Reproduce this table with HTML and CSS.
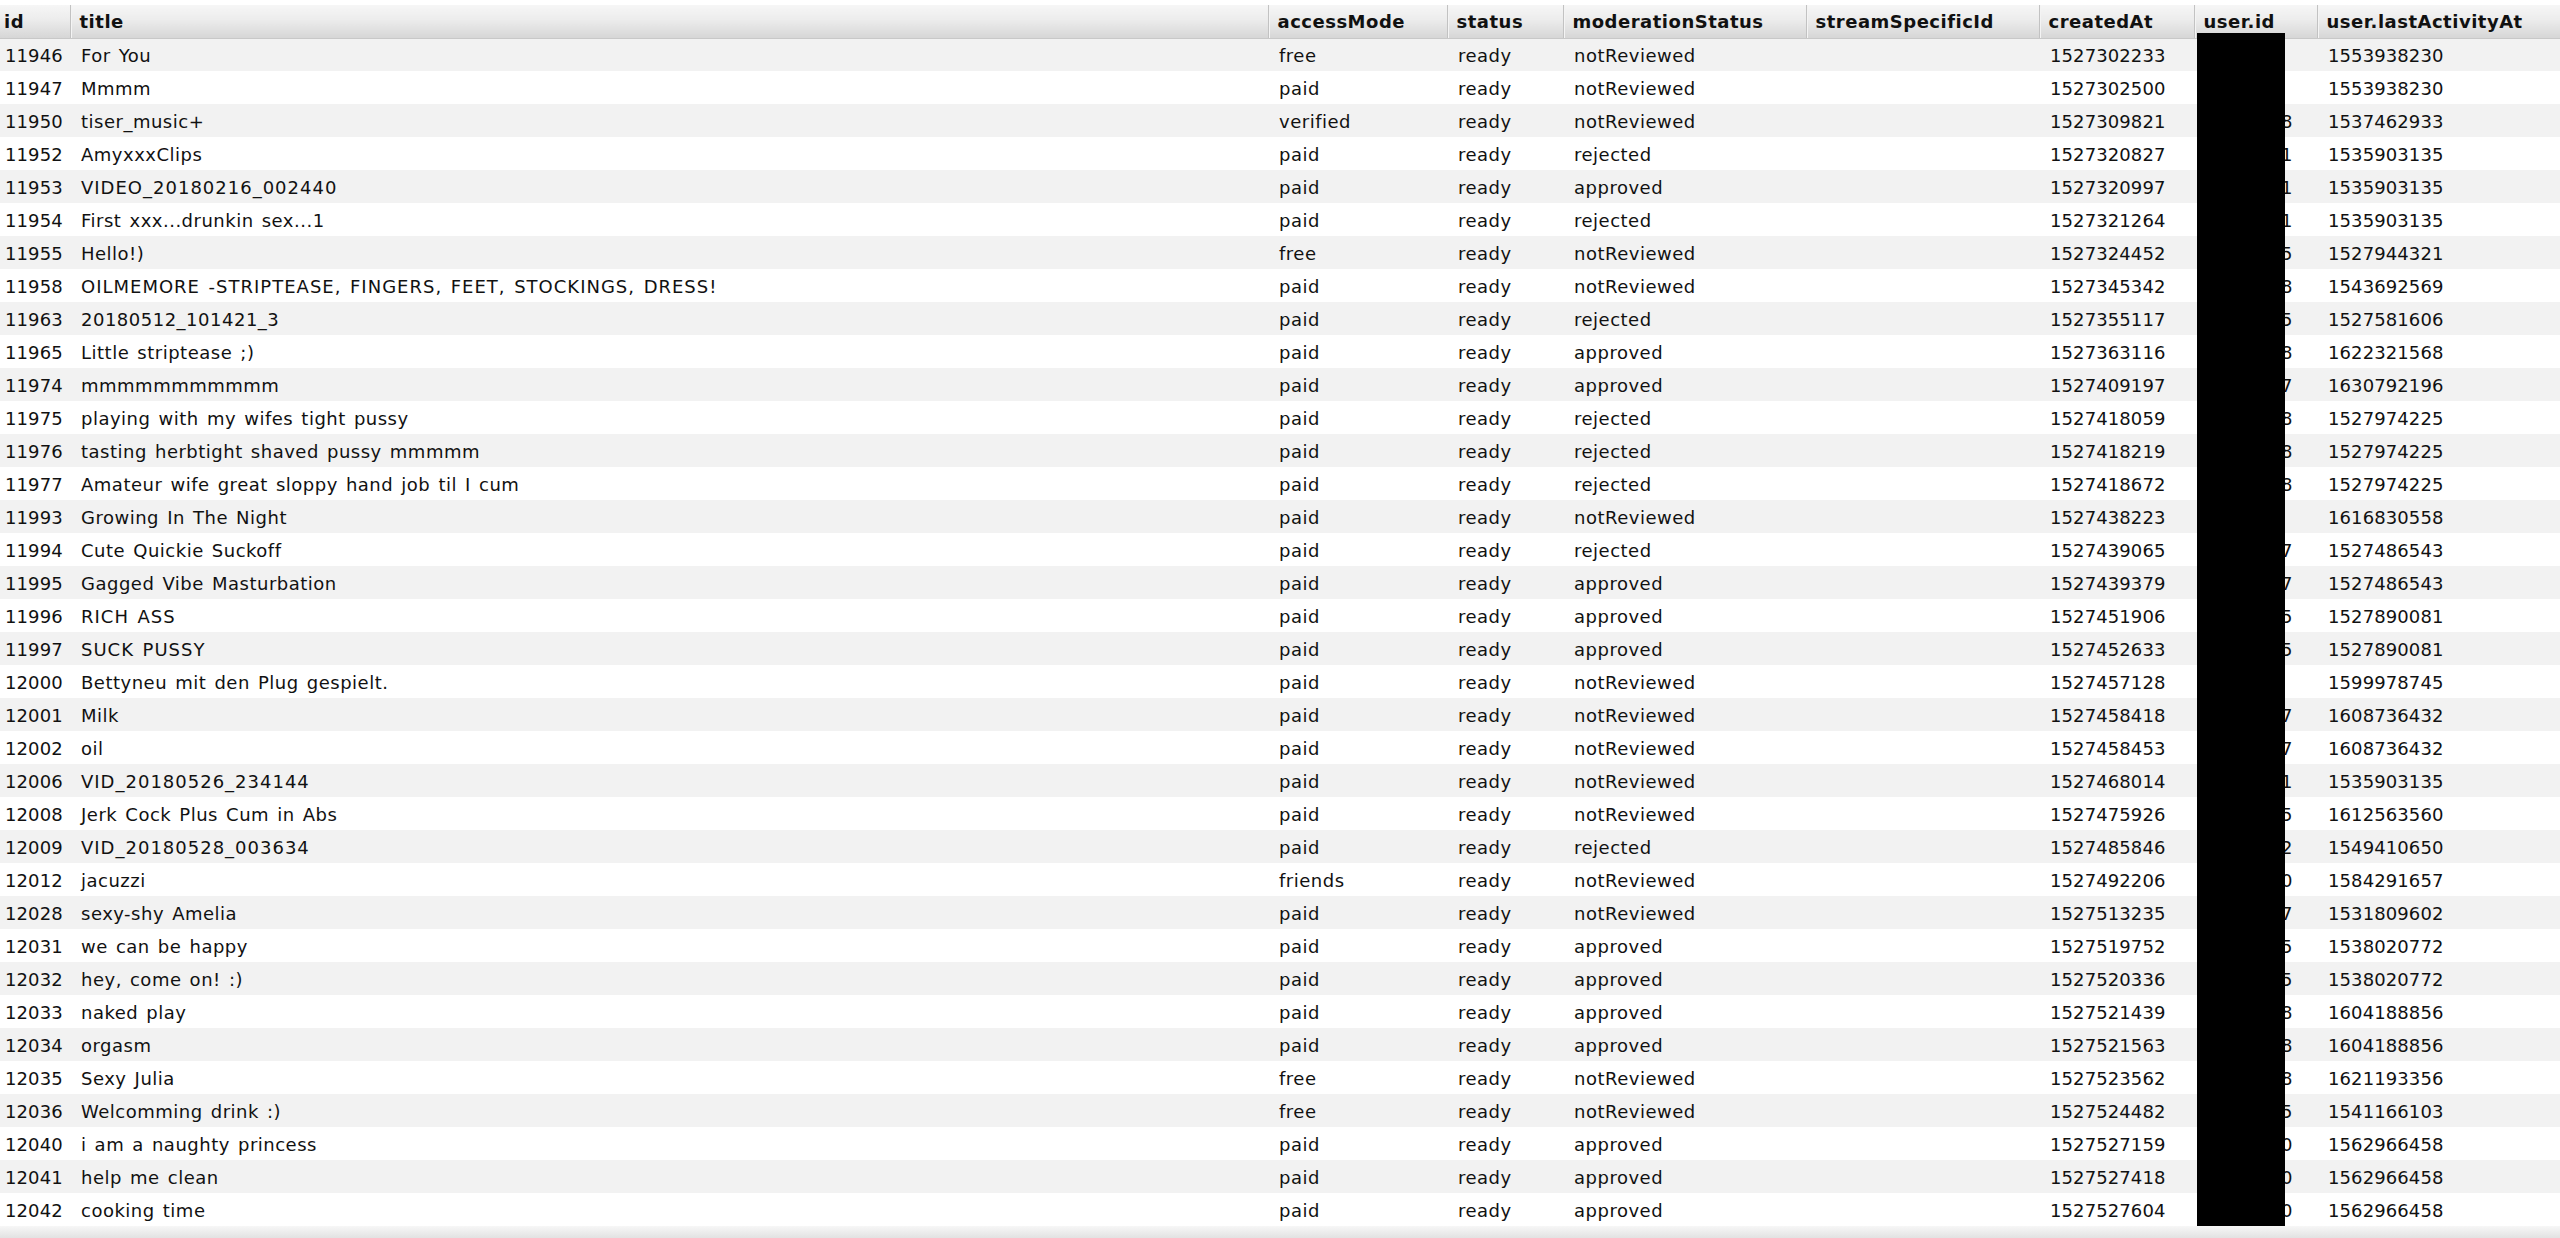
FILE: index.html
```html
<!DOCTYPE html>
<html>
<head>
<meta charset="utf-8">
<link rel="stylesheet" href="styles.css">
</head>
<body>
<div class="grid-wrap">
<table class="grid">
<colgroup>
<col class="c-id"><col class="c-title"><col class="c-access"><col class="c-status"><col class="c-mod"><col class="c-stream"><col class="c-created"><col class="c-uid"><col class="c-last">
</colgroup>
<thead>
<tr>
<th class="first">id</th><th>title</th><th>accessMode</th><th>status</th><th>moderationStatus</th><th>streamSpecificId</th><th>createdAt</th><th>user.id</th><th>user.lastActivityAt</th>
</tr>
</thead>
<tbody>
<tr><td>11946</td><td>For You</td><td>free</td><td>ready</td><td>notReviewed</td><td></td><td>1527302233</td><td class="uid"></td><td>1553938230</td></tr>
<tr><td>11947</td><td>Mmmm</td><td>paid</td><td>ready</td><td>notReviewed</td><td></td><td>1527302500</td><td class="uid"></td><td>1553938230</td></tr>
<tr><td>11950</td><td>tiser_music+</td><td>verified</td><td>ready</td><td>notReviewed</td><td></td><td>1527309821</td><td class="uid">8</td><td>1537462933</td></tr>
<tr><td>11952</td><td>AmyxxxClips</td><td>paid</td><td>ready</td><td>rejected</td><td></td><td>1527320827</td><td class="uid">1</td><td>1535903135</td></tr>
<tr><td>11953</td><td class="caps">VIDEO_20180216_002440</td><td>paid</td><td>ready</td><td>approved</td><td></td><td>1527320997</td><td class="uid">1</td><td>1535903135</td></tr>
<tr><td>11954</td><td>First xxx...drunkin sex...1</td><td>paid</td><td>ready</td><td>rejected</td><td></td><td>1527321264</td><td class="uid">1</td><td>1535903135</td></tr>
<tr><td>11955</td><td>Hello!)</td><td>free</td><td>ready</td><td>notReviewed</td><td></td><td>1527324452</td><td class="uid">5</td><td>1527944321</td></tr>
<tr><td>11958</td><td class="caps">OILMEMORE -STRIPTEASE, FINGERS, FEET, STOCKINGS, DRESS!</td><td>paid</td><td>ready</td><td>notReviewed</td><td></td><td>1527345342</td><td class="uid">8</td><td>1543692569</td></tr>
<tr><td>11963</td><td>20180512_101421_3</td><td>paid</td><td>ready</td><td>rejected</td><td></td><td>1527355117</td><td class="uid">5</td><td>1527581606</td></tr>
<tr><td>11965</td><td>Little striptease ;)</td><td>paid</td><td>ready</td><td>approved</td><td></td><td>1527363116</td><td class="uid">8</td><td>1622321568</td></tr>
<tr><td>11974</td><td>mmmmmmmmmmm</td><td>paid</td><td>ready</td><td>approved</td><td></td><td>1527409197</td><td class="uid">7</td><td>1630792196</td></tr>
<tr><td>11975</td><td>playing with my wifes tight pussy</td><td>paid</td><td>ready</td><td>rejected</td><td></td><td>1527418059</td><td class="uid">8</td><td>1527974225</td></tr>
<tr><td>11976</td><td>tasting herbtight shaved pussy mmmmm</td><td>paid</td><td>ready</td><td>rejected</td><td></td><td>1527418219</td><td class="uid">8</td><td>1527974225</td></tr>
<tr><td>11977</td><td>Amateur wife great sloppy hand job til I cum</td><td>paid</td><td>ready</td><td>rejected</td><td></td><td>1527418672</td><td class="uid">8</td><td>1527974225</td></tr>
<tr><td>11993</td><td>Growing In The Night</td><td>paid</td><td>ready</td><td>notReviewed</td><td></td><td>1527438223</td><td class="uid"></td><td>1616830558</td></tr>
<tr><td>11994</td><td>Cute Quickie Suckoff</td><td>paid</td><td>ready</td><td>rejected</td><td></td><td>1527439065</td><td class="uid">7</td><td>1527486543</td></tr>
<tr><td>11995</td><td>Gagged Vibe Masturbation</td><td>paid</td><td>ready</td><td>approved</td><td></td><td>1527439379</td><td class="uid">7</td><td>1527486543</td></tr>
<tr><td>11996</td><td class="caps">RICH ASS</td><td>paid</td><td>ready</td><td>approved</td><td></td><td>1527451906</td><td class="uid">5</td><td>1527890081</td></tr>
<tr><td>11997</td><td class="caps">SUCK PUSSY</td><td>paid</td><td>ready</td><td>approved</td><td></td><td>1527452633</td><td class="uid">5</td><td>1527890081</td></tr>
<tr><td>12000</td><td>Bettyneu mit den Plug gespielt.</td><td>paid</td><td>ready</td><td>notReviewed</td><td></td><td>1527457128</td><td class="uid"></td><td>1599978745</td></tr>
<tr><td>12001</td><td>Milk</td><td>paid</td><td>ready</td><td>notReviewed</td><td></td><td>1527458418</td><td class="uid">7</td><td>1608736432</td></tr>
<tr><td>12002</td><td>oil</td><td>paid</td><td>ready</td><td>notReviewed</td><td></td><td>1527458453</td><td class="uid">7</td><td>1608736432</td></tr>
<tr><td>12006</td><td class="caps">VID_20180526_234144</td><td>paid</td><td>ready</td><td>notReviewed</td><td></td><td>1527468014</td><td class="uid">1</td><td>1535903135</td></tr>
<tr><td>12008</td><td>Jerk Cock Plus Cum in Abs</td><td>paid</td><td>ready</td><td>notReviewed</td><td></td><td>1527475926</td><td class="uid">5</td><td>1612563560</td></tr>
<tr><td>12009</td><td class="caps">VID_20180528_003634</td><td>paid</td><td>ready</td><td>rejected</td><td></td><td>1527485846</td><td class="uid">2</td><td>1549410650</td></tr>
<tr><td>12012</td><td>jacuzzi</td><td>friends</td><td>ready</td><td>notReviewed</td><td></td><td>1527492206</td><td class="uid">0</td><td>1584291657</td></tr>
<tr><td>12028</td><td>sexy-shy Amelia</td><td>paid</td><td>ready</td><td>notReviewed</td><td></td><td>1527513235</td><td class="uid">7</td><td>1531809602</td></tr>
<tr><td>12031</td><td>we can be happy</td><td>paid</td><td>ready</td><td>approved</td><td></td><td>1527519752</td><td class="uid">5</td><td>1538020772</td></tr>
<tr><td>12032</td><td>hey, come on! :)</td><td>paid</td><td>ready</td><td>approved</td><td></td><td>1527520336</td><td class="uid">5</td><td>1538020772</td></tr>
<tr><td>12033</td><td>naked play</td><td>paid</td><td>ready</td><td>approved</td><td></td><td>1527521439</td><td class="uid">8</td><td>1604188856</td></tr>
<tr><td>12034</td><td>orgasm</td><td>paid</td><td>ready</td><td>approved</td><td></td><td>1527521563</td><td class="uid">8</td><td>1604188856</td></tr>
<tr><td>12035</td><td>Sexy Julia</td><td>free</td><td>ready</td><td>notReviewed</td><td></td><td>1527523562</td><td class="uid">8</td><td>1621193356</td></tr>
<tr><td>12036</td><td>Welcomming drink :)</td><td>free</td><td>ready</td><td>notReviewed</td><td></td><td>1527524482</td><td class="uid">5</td><td>1541166103</td></tr>
<tr><td>12040</td><td>i am a naughty princess</td><td>paid</td><td>ready</td><td>approved</td><td></td><td>1527527159</td><td class="uid">0</td><td>1562966458</td></tr>
<tr><td>12041</td><td>help me clean</td><td>paid</td><td>ready</td><td>approved</td><td></td><td>1527527418</td><td class="uid">0</td><td>1562966458</td></tr>
<tr><td>12042</td><td>cooking time</td><td>paid</td><td>ready</td><td>approved</td><td></td><td>1527527604</td><td class="uid">0</td><td>1562966458</td></tr>
</tbody>
</table>
<div class="redact"></div>
</div>
<div class="hscroll"></div>
</body>
</html>
```
FILE: styles.css
```css
html, body {
  margin: 0;
  padding: 0;
  background: #ffffff;
}
body {
  font-family: "DejaVu Sans", Verdana, sans-serif;
  color: #111111;
  padding-top: 5px;
  height: 1238px;
  box-sizing: border-box;
  overflow: hidden;
  display: flex;
  flex-direction: column;
}
.grid-wrap {
  position: relative;
  flex: 1;
}
.grid {
  border-collapse: collapse;
  table-layout: fixed;
  width: 2560px;
}
.c-id { width: 70px; }
.c-title { width: 1198px; }
.c-access { width: 179px; }
.c-status { width: 116px; }
.c-mod { width: 243px; }
.c-stream { width: 233px; }
.c-created { width: 155px; }
.c-uid { width: 123px; }
.c-last { width: 243px; }

.grid th {
  height: 33px;
  padding: 0 0 0 9px;
  text-align: left;
  font-size: 18px;
  letter-spacing: 0.5px;
  font-weight: bold;
  color: #111;
  background: linear-gradient(to bottom, #f6f6f6 0%, #ececec 45%, #d6d6d6 100%);
  border-left: 1px solid #c2c2c2;
  box-shadow: inset 1px 0 0 #f4f4f4;
  border-bottom: 1px solid #c8c8c8;
  white-space: nowrap;
  overflow: hidden;
  box-sizing: border-box;
  vertical-align: middle;
}
.grid th.first {
  border-left: none;
  box-shadow: none;
  padding-left: 4px;
}
.grid td {
  height: 33px;
  padding: 2px 0 0 11px;
  font-size: 18px;
  letter-spacing: 0.5px;
  word-spacing: 1.9px;
  white-space: nowrap;
  overflow: hidden;
  box-sizing: border-box;
  vertical-align: middle;
}
.grid td:nth-child(1),
.grid td:nth-child(7),
.grid td:nth-child(9) {
  letter-spacing: 0.1px;
}
.grid td:nth-child(1) {
  padding-left: 5px;
}
.grid td.caps {
  letter-spacing: 1px;
}
.grid td.uid {
  padding-left: 87px;
}
.grid tbody tr:nth-child(odd) td {
  background: #f2f2f2;
}
.grid tbody tr:nth-child(even) td {
  background: #ffffff;
}
.redact {
  position: absolute;
  left: 2197px;
  top: 28px;
  width: 88px;
  bottom: 0;
  background: #000;
}
.hscroll {
  height: 12px;
  background: linear-gradient(to bottom, #f7f7f7, #e2e2e2);
}
```
